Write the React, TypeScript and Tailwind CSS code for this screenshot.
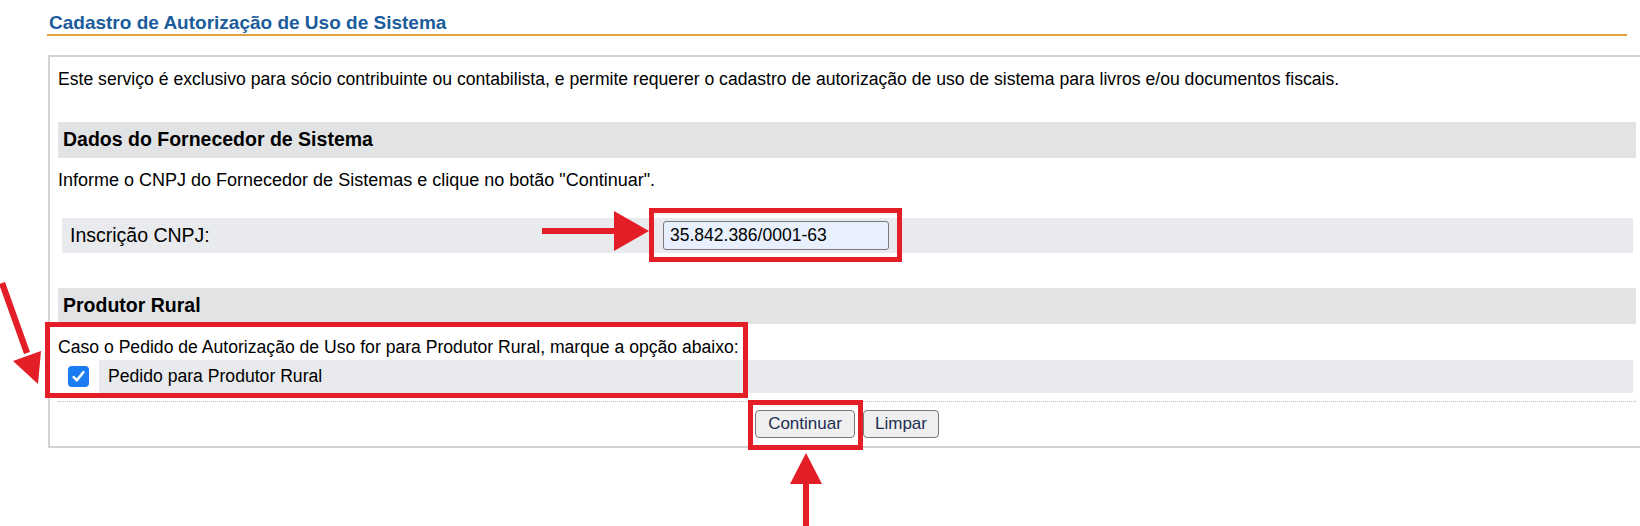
import React from 'react';

function CheckBox() {
  return (
    <div className="w-[21px] h-[21px] rounded-[4px] bg-[#1a7cf0] flex items-center justify-center">
      <svg width="15" height="15" viewBox="0 0 14 14" fill="none">
        <path d="M2.5 7.5 L5.5 10.5 L11.5 3" stroke="white" strokeWidth="2.4" strokeLinecap="round" strokeLinejoin="round" />
      </svg>
    </div>
  );
}

function Annotations() {
  // red markup drawn on top of the form
  return (
    <svg className="absolute inset-0 pointer-events-none" width="1640" height="526" viewBox="0 0 1640 526">
      <g fill="none" stroke="#e41e26" strokeWidth="5">
        <rect x="651.5" y="210.5" width="248" height="49" />
        <rect x="47.5" y="324.5" width="698" height="71" />
        <rect x="750.5" y="402.5" width="110" height="45" />
      </g>
      <g fill="#e41e26">
        <rect x="542" y="228" width="76" height="6" />
        <polygon points="614,211 649,231 614,251" />
        <rect x="803" y="480" width="6" height="46" />
        <polygon points="806,453 822,484 790,484" />
        <polygon points="-1,284 5,282 30,352 24,354" />
        <polygon points="13,361 41,351 38,384" />
      </g>
    </svg>
  );
}

export default function App() {
  return (
    <div className="relative w-[1640px] h-[526px] overflow-hidden bg-white text-black font-['Liberation_Sans',Arial,sans-serif] text-[17.6px]">
      <div className="ml-[47px] w-[1580px] pt-[12px] border-b-2 border-[#e0a23e]">
        <h1 className="pl-[2px] text-[19px] leading-[22px] font-bold text-[#1b5c9c]">
          Cadastro de Autorização de Uso de Sistema
        </h1>
      </div>

      <div className="mt-[19px] ml-[48px] w-[1596px] border-2 border-[#d2d2d2] pl-[8px] pr-[6px] pt-[11px] pb-[8px]">
        <p className="leading-[22px]">
          Este serviço é exclusivo para sócio contribuinte ou contabilista, e permite requerer o cadastro de autorização de uso de sistema para livros e/ou documentos fiscais.
        </p>

        <div className="mt-[32px] h-[36px] bg-[#e2e3e5] flex items-center pl-[5px] font-bold text-[19.5px]">
          Dados do Fornecedor de Sistema
        </div>
        <p className="mt-[11px] leading-[22px] text-[18px]">
          Informe o CNPJ do Fornecedor de Sistemas e clique no botão "Continuar".
        </p>

        <div className="mt-[27px] ml-[4px] mr-[3px] h-[35px] bg-[#e8eaed] flex items-center">
          <div className="w-[601px] pl-[8px] text-[19.5px]">Inscrição CNPJ:</div>
          <input
            readOnly
            value="35.842.386/0001-63"
            className="w-[226px] h-[29px] bg-[#e8f0fe] border border-[#7a7a7a] rounded-[3px] px-[6px] text-[17.5px] text-black outline-none"
          />
        </div>

        <div className="mt-[35px] h-[36px] bg-[#e2e3e5] flex items-center pl-[5px] font-bold text-[19.5px]">
          Produtor Rural
        </div>
        <p className="mt-[12px] leading-[22px]">
          Caso o Pedido de Autorização de Uso for para Produtor Rural, marque a opção abaixo:
        </p>
        <div className="mt-[2px] mr-[3px] h-[33px] flex">
          <div className="w-[41px] flex items-center pl-[10px]">
            <CheckBox />
          </div>
          <div className="flex-1 bg-[#e8eaed] flex items-center pl-[9px]">Pedido para Produtor Rural</div>
        </div>

        <div className="mt-[8px] border-t border-dotted border-[#bdbdbd]" />

        <div className="mt-[8px] flex justify-center gap-[8px]">
          <button className="w-[100px] h-[28px] bg-[#efefef] border border-[#7a7a7a] rounded-[4px] text-[17px] text-[#1d2e52]">
            Continuar
          </button>
          <button className="w-[76px] h-[28px] bg-[#efefef] border border-[#7a7a7a] rounded-[4px] text-[17px] text-[#1d2e52]">
            Limpar
          </button>
        </div>
      </div>

      <Annotations />
    </div>
  );
}
